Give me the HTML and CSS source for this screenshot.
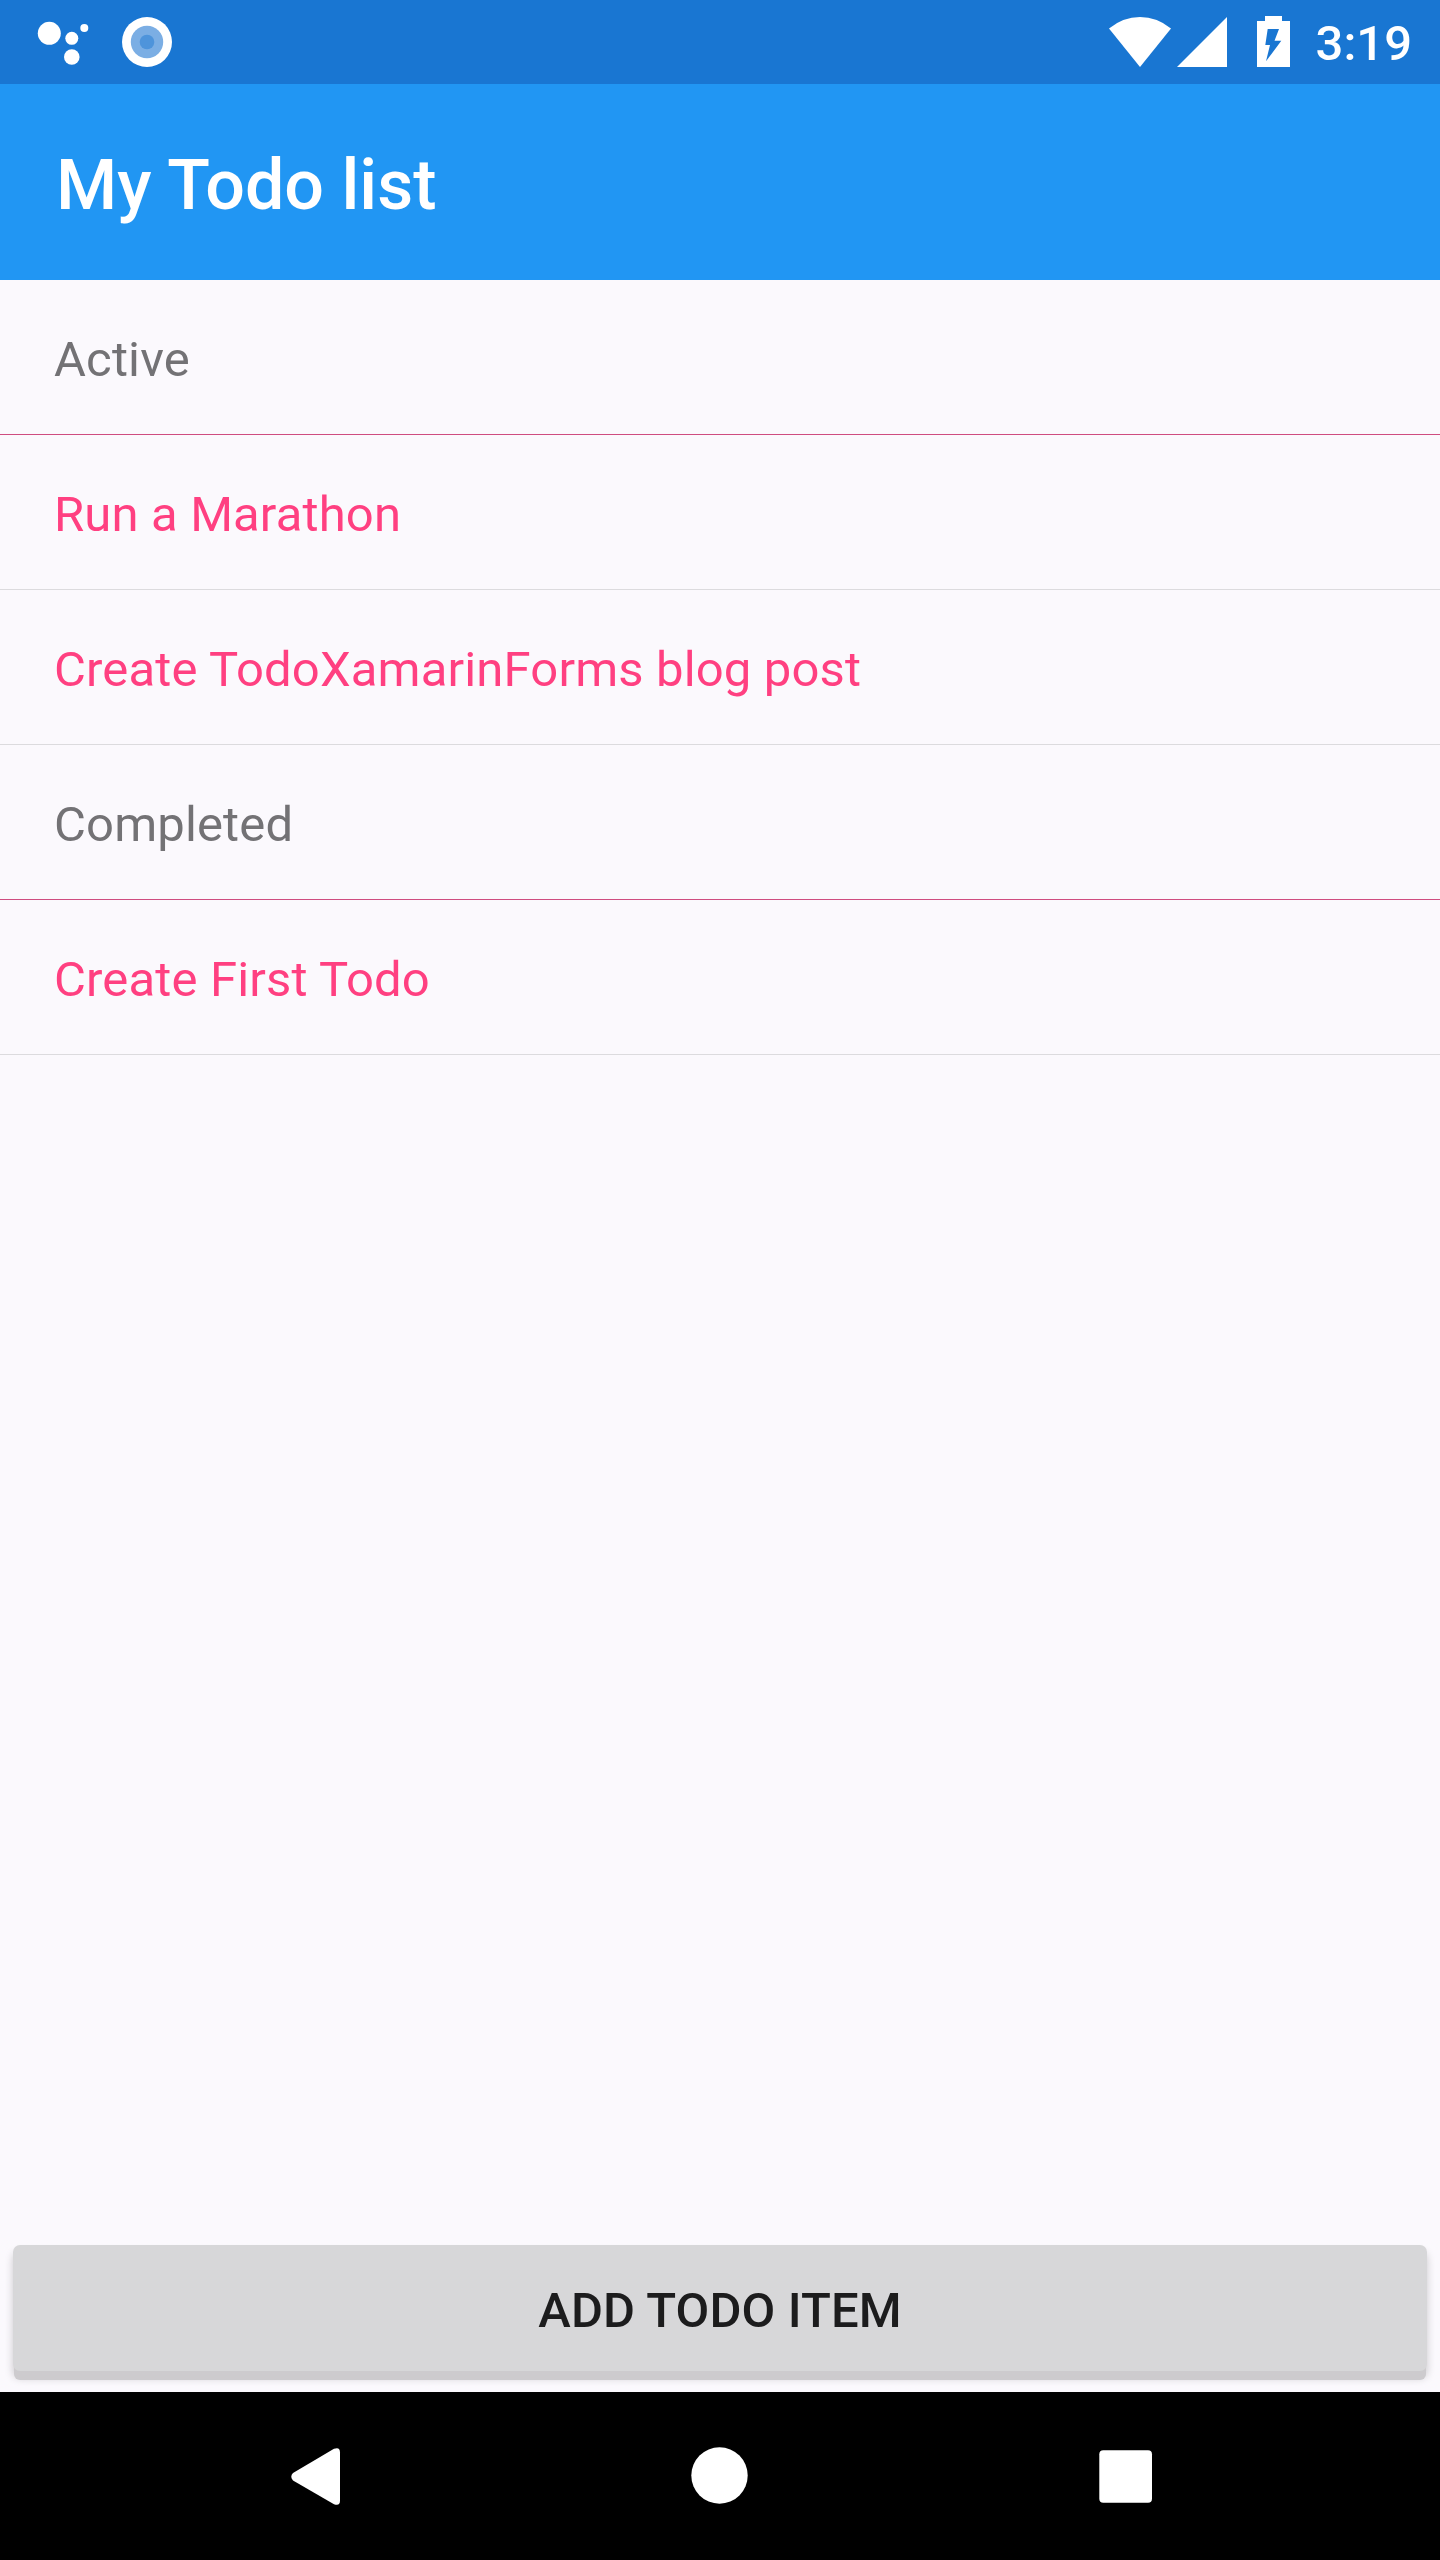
FILE: index.html
```html
<!DOCTYPE html>
<html lang="en">
<head>
<meta charset="utf-8">
<title>My Todo list</title>
<link rel="stylesheet" href="styles.css">
</head>
<body>
<div class="screen">
  <div class="status-bar">
    <svg class="notification-icons" width="140" height="84" viewBox="35 0 140 84" aria-hidden="true">
      <g fill="#fff">
        <circle cx="49.3" cy="33.3" r="11.5"/>
        <circle cx="71.8" cy="38.3" r="6.5"/>
        <circle cx="84.3" cy="28" r="4"/>
        <circle cx="71.8" cy="57" r="7.8"/>
        <circle cx="147" cy="42" r="25"/>
      </g>
      <circle cx="147" cy="42" r="16.2" fill="#7baee4"/>
      <circle cx="147" cy="42" r="7.3" fill="#4e94db"/>
    </svg>
    <div class="system-status">
      <svg width="184" height="84" viewBox="1108 0 184 84" fill="#fff" aria-hidden="true">
        <path d="M1109 28.5Q1123 17 1140 17T1171 28.5L1140 67Z"/>
        <path d="M1227 17V67H1177Z"/>
        <path fill-rule="evenodd" d="M1265 16H1282V21H1290V67H1257V21H1265ZM1267.7 29H1279L1274.5 40.7H1281.3L1266 61.3L1270 45H1265.3Z"/>
      </svg>
      <span class="clock">3:19</span>
    </div>
  </div>
  <header class="app-bar"><h1 class="title">My Todo list</h1></header>
  <main class="content">
    <section>
      <h2 class="row group-header">Active</h2>
      <div class="row item">Run a Marathon</div>
      <div class="row item">Create TodoXamarinForms blog post</div>
    </section>
    <section>
      <h2 class="row group-header">Completed</h2>
      <div class="row item">Create First Todo</div>
    </section>
    <button class="add-button" type="button">ADD TODO ITEM</button>
  </main>
  <nav class="nav-bar">
    <svg width="1440" height="168" viewBox="0 0 1440 168" fill="#fff" aria-hidden="true">
      <path d="M293 81L334 56.800Q340 54.500 340 60.500V108.500Q340 114.500 334 112.200L293 88.500Q289.500 84.700 293 81Z"/>
      <circle cx="719.500" cy="83.500" r="28.200"/>
      <rect x="1099.300" y="58.200" width="52.700" height="52.500" rx="4"/>
    </svg>
  </nav>
</div>
</body>
</html>
```
FILE: styles.css
```css
* { box-sizing: border-box; }

body {
  margin: 0;
  font-family: Roboto, "Liberation Sans", sans-serif;
  font-size: 49px;
}

.screen {
  display: flex;
  flex-direction: column;
  width: 1440px;
  height: 2560px;
  background: #fbf9fd;
}

.status-bar {
  display: flex;
  justify-content: space-between;
  height: 84px;
  padding: 0 28px 0 35px;
  background: #1976d2;
}

.system-status { display: flex; gap: 24px; }
.status-bar svg { display: block; }

.clock {
  color: #fff;
  font-weight: 500;
  line-height: 88px;
}

.app-bar {
  height: 196px;
  padding-left: 56px;
  background: #2196f3;
}

.title {
  margin: 0;
  color: #fff;
  font-size: 70px;
  font-weight: 500;
  line-height: 202px;
}

.content {
  display: flex;
  flex: 1;
  flex-direction: column;
}

.row {
  height: 155px;
  margin: 0;
  padding-left: 54px;
  border-bottom: 1px solid #dcdbde;
  font-size: 49px;
  font-weight: 400;
  letter-spacing: .15px;
  line-height: 159px;
}

.group-header {
  border-color: #cf4d80;
  color: #737275;
}

.item { color: #ff4081; }

.add-button {
  height: 126px;
  margin: auto 13px 21px;
  padding: 4px 0 0;
  border: 0;
  border-radius: 7px;
  background: #d7d7d9;
  box-shadow: 0 10px 0 -1px #cdcbce, 0 7px 8px rgba(0, 0, 0, .2);
  color: #1c1c1d;
  font-family: inherit;
  font-size: 49px;
  font-weight: 500;
  letter-spacing: .1px;
}

.nav-bar { height: 168px; background: #000; }
.nav-bar svg { display: block; }
```
